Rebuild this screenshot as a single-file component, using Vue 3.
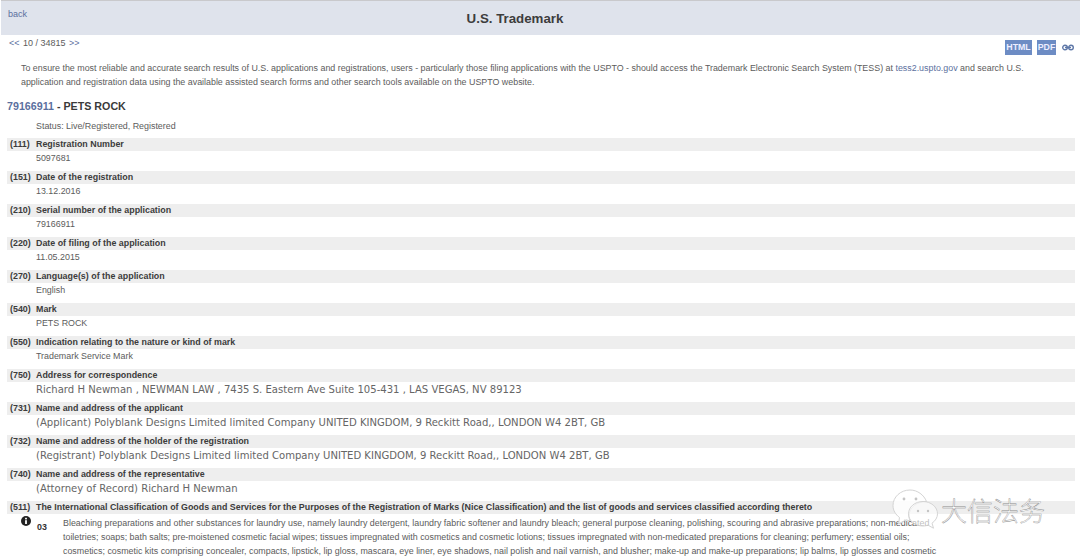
<script setup>
const rows = [
  { code: '(111)', title: 'Registration Number', value: '5097681' },
  { code: '(151)', title: 'Date of the registration', value: '13.12.2016' },
  { code: '(210)', title: 'Serial number of the application', value: '79166911' },
  { code: '(220)', title: 'Date of filing of the application', value: '11.05.2015' },
  { code: '(270)', title: 'Language(s) of the application', value: 'English' },
  { code: '(540)', title: 'Mark', value: 'PETS ROCK' },
  { code: '(550)', title: 'Indication relating to the nature or kind of mark', value: 'Trademark Service Mark' },
  { code: '(750)', title: 'Address for correspondence', value: 'Richard H Newman , NEWMAN LAW , 7435 S. Eastern Ave Suite 105-431 , LAS VEGAS, NV 89123', big: true },
  { code: '(731)', title: 'Name and address of the applicant', value: '(Applicant) Polyblank Designs Limited limited Company UNITED KINGDOM, 9 Reckitt Road,, LONDON W4 2BT, GB', big: true },
  { code: '(732)', title: 'Name and address of the holder of the registration', value: '(Registrant) Polyblank Designs Limited limited Company UNITED KINGDOM, 9 Reckitt Road,, LONDON W4 2BT, GB', big: true },
  { code: '(740)', title: 'Name and address of the representative', value: '(Attorney of Record) Richard H Newman', big: true },
]
</script>

<template>
  <div class="page">
    <header class="top">
      <a class="back">back</a>
      <h1>U.S. Trademark</h1>
    </header>
    <div class="tools">
      <div class="pager"><a>&lt;&lt;</a> 10 / 34815 <a>&gt;&gt;</a></div>
      <div class="actions">
        <span class="btn html">HTML</span>
        <span class="btn pdf">PDF</span>
        <svg class="link" width="12" height="7" viewBox="0 0 12 7">
          <ellipse cx="3" cy="3.500" rx="2.300" ry="2.200" fill="none" stroke="#5f78a8" stroke-width="1.400" />
          <ellipse cx="9" cy="3.500" rx="2.300" ry="2.200" fill="none" stroke="#5f78a8" stroke-width="1.400" />
          <path d="M3 3.500h6" stroke="#5f78a8" stroke-width="1.400" />
        </svg>
      </div>
    </div>
    <p class="notice">To ensure the most reliable and accurate search results of U.S. applications and registrations, users - particularly those filing applications with the USPTO - should access the Trademark Electronic Search System (TESS) at <a>tess2.uspto.gov</a> and search U.S. application and registration data using the available assisted search forms and other search tools available on the USPTO website.</p>
    <h2><a>79166911</a> - PETS ROCK</h2>
    <div class="status">Status: Live/Registered, Registered</div>
    <section v-for="r in rows" :key="r.code" class="row">
      <div class="bar"><b class="code">{{ r.code }}</b><b>{{ r.title }}</b></div>
      <div class="value" :class="{ big: r.big }">{{ r.value }}</div>
    </section>
    <section class="row">
      <div class="bar"><b class="code">(511)</b><b>The International Classification of Goods and Services for the Purposes of the Registration of Marks (Nice Classification) and the list of goods and services classified according thereto</b></div>
      <div class="goods">
        <svg class="info" width="10" height="10" viewBox="0 0 10 10">
          <circle cx="5" cy="5" r="5" fill="#222" />
          <rect x="4.100" y="4.200" width="1.800" height="3.800" fill="#fff" />
          <rect x="4.100" y="1.800" width="1.800" height="1.600" fill="#fff" />
        </svg>
        <b class="cls">03</b>
        <p>Bleaching preparations and other substances for laundry use, namely laundry detergent, laundry fabric softener and laundry bleach; general purpose cleaning, polishing, scouring and abrasive preparations; non-medicated toiletries; soaps; bath salts; pre-moistened cosmetic facial wipes; tissues impregnated with cosmetics and cosmetic lotions; tissues impregnated with non-medicated preparations for cleaning; perfumery; essential oils; cosmetics; cosmetic kits comprising concealer, compacts, lipstick, lip gloss, mascara, eye liner, eye shadows, nail polish and nail varnish, and blusher; make-up and make-up preparations; lip balms, lip glosses and cosmetic</p>
      </div>
    </section>
    <div class="mark">
      <svg width="46" height="42" viewBox="0 0 46 42">
        <path d="M18 1C8.500 1 1 8 1 16.500c0 5 2.600 9 6.500 12l-1 6.500 7.500-4c1.500.4 2.600.5 4 .6-.6-1.600-1-3-1-4.600C17 18.500 25 12.500 34.500 12.500 32 6 25.500 1 18 1z" fill="#fff" fill-opacity=".8" stroke="#d4d4d4" stroke-width="1" />
        <path d="M31 12.500c-8 0-14.500 5.500-14.500 12.300S23 37 31 37c1.800 0 3.300-.3 5-.8l5.500 3-1.500-5c3.400-2.400 5.500-5.600 5.500-9.400 0-6.800-6.500-12.300-14.500-12.300z" fill="#fff" fill-opacity=".6" stroke="#d4d4d4" stroke-width="1" />
        <circle cx="12" cy="10" r="1.400" fill="#c4c4c4" /><circle cx="24" cy="10" r="1.400" fill="#c4c4c4" />
        <circle cx="26" cy="22" r="1.200" fill="#c4c4c4" /><circle cx="36" cy="22" r="1.200" fill="#c4c4c4" />
      </svg>
      <span>大信法务</span>
    </div>
  </div>
</template>

<style>
html, body { margin: 0; background: #fff; overflow: hidden; }
</style>

<style scoped>
.page { position: relative; width: 1080px; height: 556px; overflow: hidden; font-family: "Liberation Sans", Arial, sans-serif; font-size: 8.880px; line-height: 14px; color: #5c5c5c; }
a { color: #5b6f9e; }
.top { position: relative; height: 34px; margin-left: 1px; background: #dfe3ec; border-top: 1px solid #c9c9cc; }
.back { position: absolute; left: 7px; top: 6px; font-size: 9px; }
h1 { margin: 0; padding: 11px 51px 0 0; text-align: center; font-size: 13.300px; line-height: 14px; color: #3d3d3d; font-weight: bold; }
.tools { display: flex; justify-content: space-between; padding: 2px 6px 0 8px; height: 26px; box-sizing: border-box; }
.pager { line-height: 12px; font-size: 9px; }
.pager a { font-size: 9px; margin: 0 1px; }
.actions { display: flex; align-items: flex-start; gap: 5px; padding-top: 3px; }
.btn { background: #6d8cc4; color: #eef; font-weight: bold; font-size: 8.800px; line-height: 14px; height: 15px; text-align: center; }
.html { width: 27px; }
.pdf { width: 19px; }
.link { margin: 4px 0 0 1px; }
.notice { margin: 0; padding: 0 45px 0 21px; line-height: 14px; }
h2 { margin: 10px 0 0 7px; font-size: 10.700px; line-height: 14px; color: #3a3a3a; font-weight: bold; }
.status { margin: 6px 0 5px 36px; line-height: 14px; height: 14px; }
.row { margin: 0 5px 6px 7px; height: 27px; }
.bar { display: flex; background: #eee; height: 13px; line-height: 13px; color: #3c3c3c; }
.code { width: 29px; padding-left: 3px; box-sizing: border-box; flex: none; }
.value { padding-left: 29px; line-height: 14px; }
.value.big { font-family: "DejaVu Sans", sans-serif; font-size: 10.070px; color: #666; padding-top: 1px; height: 13px; }
.goods { position: relative; display: flex; padding-left: 30px; margin-top: 2px; }
.info { position: absolute; left: 14px; top: 0; }
.cls { width: 26px; color: #333; flex: none; padding-top: 4px; }
.goods p { margin: 0; line-height: 14px; width: 880px; }
.mark { position: absolute; left: 892px; top: 489px; display: flex; align-items: center; gap: 3px; }
.mark span { font-family: "Noto Sans CJK SC", sans-serif; font-size: 26px; font-weight: 300; line-height: 30px; color: #fff; -webkit-text-stroke: 0.4px #888; }
</style>
